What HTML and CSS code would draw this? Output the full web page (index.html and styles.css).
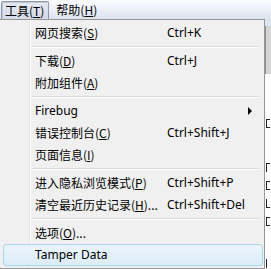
FILE: index.html
```html
<!DOCTYPE html>
<html>
<head>
<meta charset="utf-8">
<link rel="stylesheet" href="styles.css">
</head>
<body>
<div class="menubar">
  <span class="mb-item active">工具(<u>T</u>)</span>
  <span class="mb-item">帮助(<u>H</u>)</span>
</div>
<div class="page">
  <div class="menu">
    <div class="item"><span></span><span class="label">网页搜索(<u>S</u>)</span><span class="key">Ctrl+K</span><span></span></div>
    <div class="sep"></div>
    <div class="item"><span></span><span class="label">下载(<u>D</u>)</span><span class="key">Ctrl+J</span><span></span></div>
    <div class="item"><span></span><span class="label">附加组件(<u>A</u>)</span><span class="key"></span><span></span></div>
    <div class="sep"></div>
    <div class="item"><span></span><span class="label latin">Firebug</span><span class="key"></span><span class="arrow"></span></div>
    <div class="item"><span></span><span class="label">错误控制台(<u>C</u>)</span><span class="key">Ctrl+Shift+J</span><span></span></div>
    <div class="item"><span></span><span class="label">页面信息(<u>I</u>)</span><span class="key"></span><span></span></div>
    <div class="sep"></div>
    <div class="item"><span></span><span class="label">进入隐私浏览模式(<u>P</u>)</span><span class="key">Ctrl+Shift+P</span><span></span></div>
    <div class="item"><span></span><span class="label">清空最近历史记录(<u>H</u>)...</span><span class="key">Ctrl+Shift+Del</span><span></span></div>
    <div class="sep"></div>
    <div class="item"><span></span><span class="label">选项(<u>O</u>)...</span><span class="key"></span><span></span></div>
    <div class="item hover"><span></span><span class="label latin">Tamper Data</span><span class="key"></span><span></span></div>
  </div>
  <div class="side">
    <div class="scroll"></div>
    <div class="frag f1"></div>
    <div class="frag f2"></div>
    <div class="frag f3"></div>
    <div class="frag f4"></div>
    <div class="frag f5"></div>
    <div class="frag f6"></div>
  </div>
</div>
</body>
</html>
```
FILE: styles.css
```css
* { box-sizing: border-box; }
html, body { margin: 0; padding: 0; }
body {
  width: 271px;
  height: 269px;
  overflow: hidden;
  background: #ffffff;
  font-family: "Noto Sans", "Noto Sans CJK SC", sans-serif;
  font-size: 12px;
  color: #000;
}
u { text-decoration: underline; text-underline-offset: 1px; }
.menubar {
  height: 19px;
  display: flex;
  align-items: stretch;
  padding: 1px 0 0 1px;
  background: linear-gradient(#fbfcfe, #e8edf6 60%, #dbe3f0);
}
.mb-item {
  display: flex;
  align-items: center;
  padding: 0 4px 0 3px;
  height: 18px;
  line-height: 18px;
  border: 1px solid transparent;
  font-family: "Noto Sans CJK SC", sans-serif;
}
.mb-item.active {
  border: 1px solid #8e98a8;
  border-bottom: none;
  border-radius: 2px 2px 0 0;
  background: linear-gradient(#e4e9f1, #d3dbe7);
  box-shadow: inset 1px 1px 0 #c1c9d6;
}
.mb-item + .mb-item { margin-left: 3px; }
.page {
  display: flex;
  height: 250px;
}
.menu {
  width: 265px;
  flex: none;
  border: 1px solid #979797;
  border-left: none;
  background-color: #f0f0f0;
  background-image: linear-gradient(to right, transparent 29px, #e2e3e3 29px, #e2e3e3 30px, #ffffff 30px, #ffffff 31px, transparent 31px);
  padding: 2px 1px 2px 2px;
  font-family: "Noto Sans CJK SC", sans-serif;
}
.item {
  display: grid;
  grid-template-columns: 31px 132px 1fr 16px;
  height: 22px;
  align-items: center;
  border: 1px solid transparent;
  border-radius: 3px;
  margin-left: 1px;
}
.item .label { line-height: 20px; }
.key {
  font-family: "Noto Sans", sans-serif;
  line-height: 20px;
}
.label.latin { font-family: "Noto Sans", sans-serif; }
.arrow {
  width: 0;
  height: 0;
  border-left: 4px solid #000;
  border-top: 4px solid transparent;
  border-bottom: 4px solid transparent;
  margin-left: 2px;
}
.item.hover {
  border-color: #a8d8eb;
  background: linear-gradient(#eaf4fb, #dcedf8);
}
.sep {
  height: 6px;
  margin-left: 30px;
  margin-right: 4px;
  background: linear-gradient(transparent 2px, #d7d7d7 2px, #d7d7d7 3px, #ffffff 3px, #ffffff 4px, transparent 4px);
}
.side {
  flex: 1;
  position: relative;
  background: #ffffff;
  overflow: hidden;
}
.side::before {
  content: "";
  display: block;
  height: 7px;
  background: #dbe3f0;
}
.scroll {
  position: absolute;
  top: 7px;
  left: 0;
  width: 6px;
  height: 48px;
  background: linear-gradient(to right, #8f8f8f 1px, #d4d4d4 1px);
}
.frag {
  position: absolute;
  left: 1px;
  width: 4px;
  height: 9px;
  border-left: 1px solid #222;
  border-top: 1px solid #222;
  border-bottom: 1px solid #222;
}
.f1 { top: 100px; }
.f2 { top: 144px; border-bottom: none; border-top: 1px solid #222; }
.f3 { top: 162px; }
.f4 { top: 180px; border-top: none; }
.f5 { top: 198px; }
.f6 { top: 240px; border: none; border-left: 1px solid #222; }
```
